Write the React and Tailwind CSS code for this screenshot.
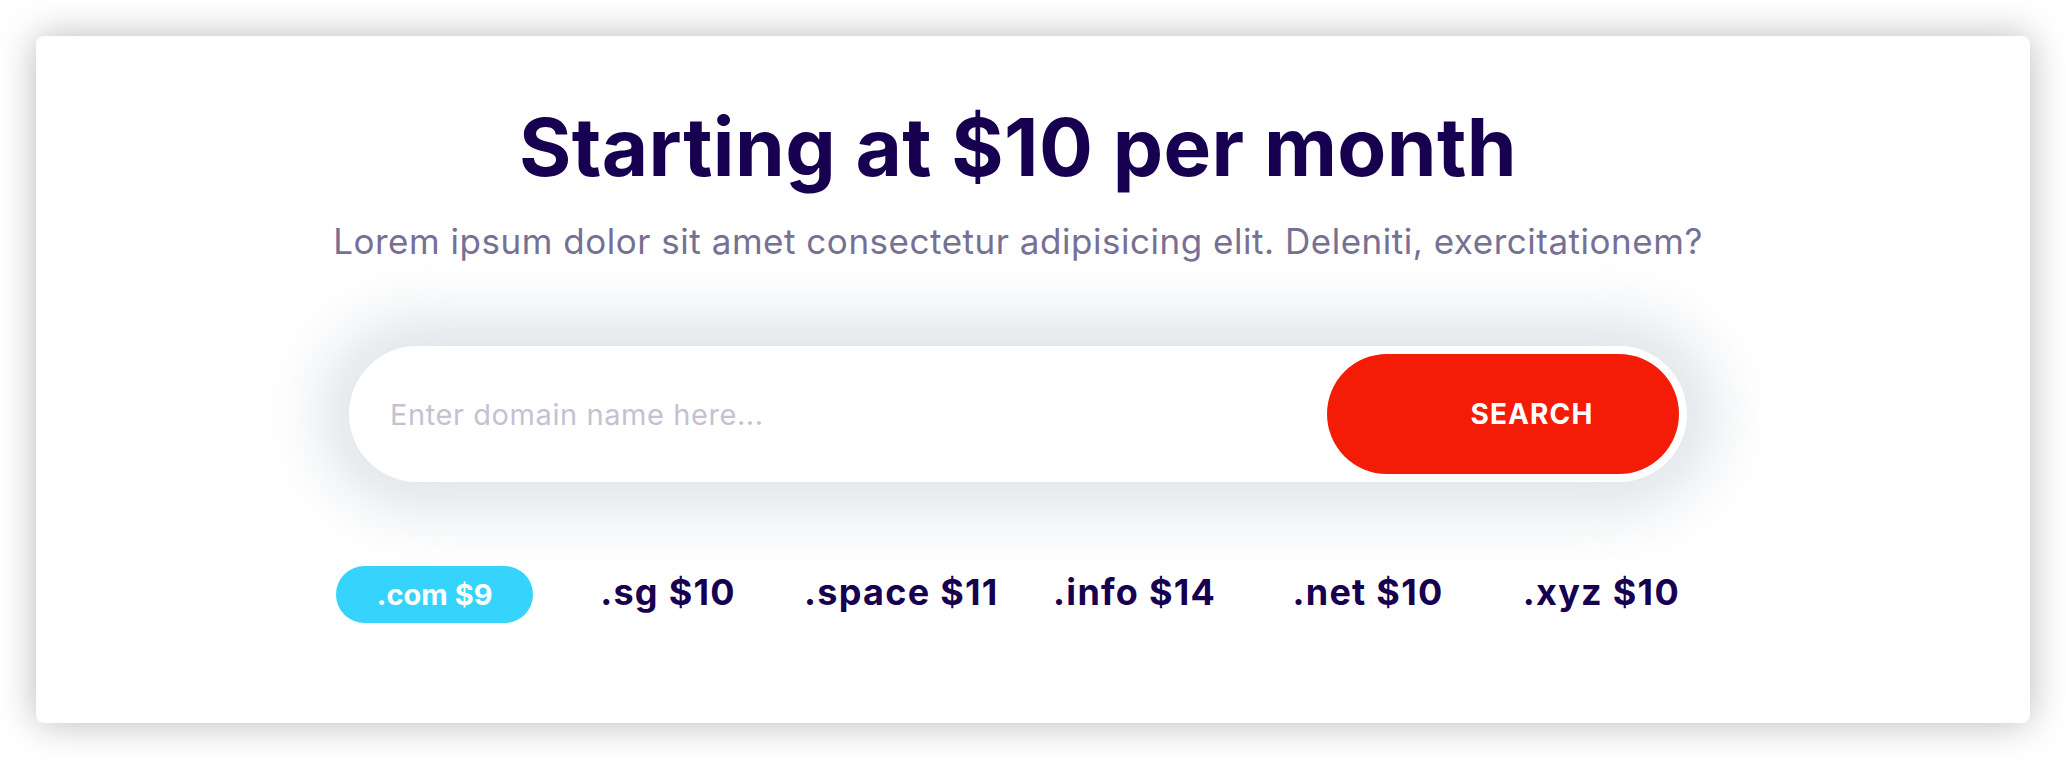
import React from 'react';

const domains = [
  { name: '.com', price: '$9', active: true },
  { name: '.sg', price: '$10' },
  { name: '.space', price: '$11' },
  { name: '.info', price: '$14' },
  { name: '.net', price: '$10' },
  { name: '.xyz', price: '$10' },
];

const App = () => {
  return (
    <div className="min-h-screen bg-white p-[36px] font-['Inter',sans-serif]">
      <div className="rounded-lg bg-white shadow-[0_0_38px_rgba(0,0,0,0.28)] pt-[71px] pb-[100px] pr-[30px]">
        <div className="mx-auto w-[1400px] flex flex-col items-center">
          <h1 className="text-[80px] leading-[80px] font-bold text-[#170050] tracking-[0.005em]">
            Starting at $10 per month
          </h1>
          <p className="mt-[34px] text-[35px] leading-[40px] text-[#767094] tracking-[0.015em]">
            Lorem ipsum dolor sit amet consectetur adipisicing elit. Deleniti, exercitationem?
          </p>

          <div className="mt-[85px] w-[1338px] h-[136px] rounded-full bg-white flex items-center p-[8px] shadow-[0_0_60px_30px_rgba(214,220,226,0.75)]">
            <input
              type="text"
              placeholder="Enter domain name here..."
              className="flex-1 h-full bg-transparent outline-none pl-[33px] text-[29px] tracking-[0.02em] text-[#170050] placeholder:text-[#c5c1d3]"
            />
            <button className="h-[120px] w-[352px] rounded-full bg-[#f41c07] text-white text-[28px] font-bold tracking-[0.04em] pl-[58px]">
              SEARCH
            </button>
          </div>

          <div className="mt-[84px] w-full grid grid-cols-6">
            {domains.map((d, i) => (
              <div key={i} className="flex justify-center items-center h-[57px]">
                {d.active ? (
                  <span className="w-[197px] h-[57px] rounded-full bg-[#36d3fd] text-white text-[29px] font-bold flex items-center justify-center">
                    {d.name} {d.price}
                  </span>
                ) : (
                  <span className="mb-[5px] text-[36px] font-bold text-[#170050] tracking-[0.035em]">
                    {d.name} {d.price}
                  </span>
                )}
              </div>
            ))}
          </div>
        </div>
      </div>
    </div>
  );
};

export default App;
